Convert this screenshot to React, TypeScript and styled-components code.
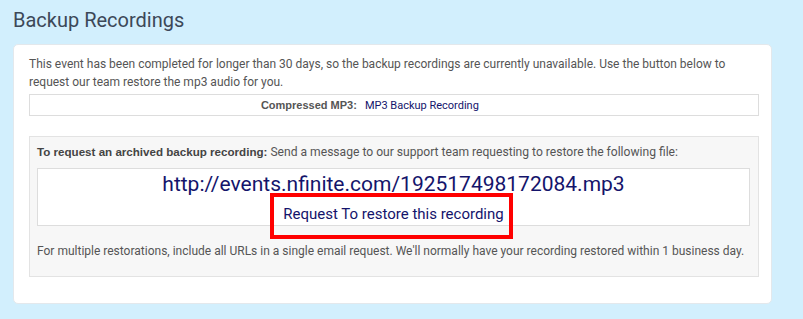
import styled, { createGlobalStyle } from "styled-components";

const GlobalStyle = createGlobalStyle`
  body {
    margin: 0;
    background: #d2effd;
    font-family: Roboto, "Liberation Sans", Arial, sans-serif;
  }
`;

const Page = styled.div`
  padding: 8px 31px 17px 13px;
`;

const Title = styled.h2`
  margin: 0 0 12px;
  font-size: 20px;
  line-height: 24px;
  font-weight: 400;
  color: #3c4858;
`;

const Card = styled.div`
  background: #fff;
  border: 1px solid #e3e8ec;
  border-radius: 5px;
  padding: 10px 12px 26px 15px;
`;

const Intro = styled.p`
  margin: 0 0 3px;
  font-size: 12px;
  line-height: 18px;
  color: #555;
`;

const FormatRow = styled.div`
  display: grid;
  grid-template-columns: 46% 54%;
  border: 1px solid #ddd;
  height: 20px;
  align-items: center;
  font-size: 11px;
`;

const FormatLabel = styled.span`
  text-align: right;
  padding-right: 8px;
  font-family: "Liberation Sans", Arial, sans-serif;
  font-weight: 700;
  color: #555;
`;

const FormatValue = styled.span`
  font-family: Roboto, sans-serif;
  color: #14146b;
`;

const RequestBox = styled.div`
  margin-top: 20px;
  background: #f7f7f7;
  border: 1px solid #e3e3e3;
  padding: 6px 8px 16px 7px;
`;

const Lead = styled.p`
  margin: 0 0 7px;
  font-size: 12.1px;
  line-height: 18px;
  color: #555;

  b {
    font-family: "Liberation Sans", Arial, sans-serif;
    font-size: 11.6px;
    color: #444;
  }
`;

const FileBox = styled.div`
  background: #fff;
  border: 1px solid #ddd;
  padding: 3px 0 1px;
  display: flex;
  flex-direction: column;
  align-items: center;
  gap: 8px;
`;

const FileUrl = styled.div`
  font-size: 21px;
  line-height: 24px;
  color: #14146b;
`;

const RestoreLink = styled.span`
  position: relative;
  font-size: 15px;
  line-height: 20px;
  color: #14146b;

  &::after {
    content: "";
    position: absolute;
    top: -11px;
    right: -9px;
    bottom: -15px;
    left: -13px;
    border: 4px solid #ff0000;
    pointer-events: none;
  }
`;

const Footnote = styled.p`
  margin: 16px 0 0;
  font-size: 12px;
  line-height: 18px;
  color: #555;
`;

function App() {
  return (
    <Page>
      <GlobalStyle />
      <Title>Backup Recordings</Title>
      <Card>
        <Intro>
          This event has been completed for longer than 30 days, so the backup
          recordings are currently unavailable. Use the button below to
          request our team restore the mp3 audio for you.
        </Intro>
        <FormatRow>
          <FormatLabel>Compressed MP3:</FormatLabel>
          <FormatValue>MP3 Backup Recording</FormatValue>
        </FormatRow>
        <RequestBox>
          <Lead>
            <b>To request an archived backup recording:</b> Send a message to
            our support team requesting to restore the following file:
          </Lead>
          <FileBox>
            <FileUrl>http://events.nfinite.com/192517498172084.mp3</FileUrl>
            <RestoreLink>Request To restore this recording</RestoreLink>
          </FileBox>
          <Footnote>
            For multiple restorations, include all URLs in a single email
            request. We'll normally have your recording restored within 1
            business day.
          </Footnote>
        </RequestBox>
      </Card>
    </Page>
  );
}

export default App;
